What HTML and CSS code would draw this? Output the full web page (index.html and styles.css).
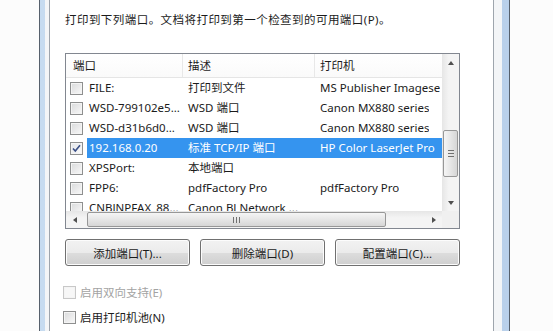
FILE: index.html
```html
<!DOCTYPE html>
<html lang="zh-CN">
<head>
    <meta charset="UTF-8">
    <title>端口</title>
    <link rel="stylesheet" href="styles.css">
</head>
<body>
    <div class="frame">
        <div class="frame-gap">
            <div class="panel">
                <p class="intro">打印到下列端口。文档将打印到第一个检查到的可用端口(P)。</p>

                <div class="ports">
                    <div class="ports-main">
                        <div class="ports-view">
                            <div class="ports-head">
                                <div class="hcell c1">端口</div>
                                <div class="hcell c2">描述</div>
                                <div class="hcell c3">打印机</div>
                            </div>
                            <div class="row">
                                <span class="cb-cell"><span class="cb"></span></span>
                                <div class="row-body"><span class="c1">FILE:</span><span class="c2">打印到文件</span><span class="c3">MS Publisher Imagese</span></div>
                            </div>
                            <div class="row">
                                <span class="cb-cell"><span class="cb"></span></span>
                                <div class="row-body"><span class="c1">WSD-799102e5...</span><span class="c2">WSD 端口</span><span class="c3">Canon MX880 series</span></div>
                            </div>
                            <div class="row">
                                <span class="cb-cell"><span class="cb"></span></span>
                                <div class="row-body"><span class="c1">WSD-d31b6d0...</span><span class="c2">WSD 端口</span><span class="c3">Canon MX880 series</span></div>
                            </div>
                            <div class="row">
                                <span class="cb-cell"><span class="cb checked"><svg viewBox="0 0 11 11" width="11" height="11"><path d="M2 5.5 L4.3 8 L9 2.2" fill="none" stroke="#3b4f86" stroke-width="1.6"/></svg></span></span>
                                <div class="row-body selected"><span class="c1">192.168.0.20</span><span class="c2">标准 TCP/IP 端口</span><span class="c3">HP Color LaserJet Pro</span></div>
                            </div>
                            <div class="row">
                                <span class="cb-cell"><span class="cb"></span></span>
                                <div class="row-body"><span class="c1">XPSPort:</span><span class="c2">本地端口</span><span class="c3"></span></div>
                            </div>
                            <div class="row">
                                <span class="cb-cell"><span class="cb"></span></span>
                                <div class="row-body"><span class="c1">FPP6:</span><span class="c2">pdfFactory Pro</span><span class="c3">pdfFactory Pro</span></div>
                            </div>
                            <div class="row">
                                <span class="cb-cell"><span class="cb"></span></span>
                                <div class="row-body"><span class="c1">CNBJNPFAX_88...</span><span class="c2">Canon BJ Network ...</span><span class="c3"></span></div>
                            </div>
                        </div>
                        <div class="vscroll">
                            <span class="sb-btn"><i class="arrow up"></i></span>
                            <span class="vtrack"><span class="vthumb"><i class="grip-h"></i></span></span>
                            <span class="sb-btn"><i class="arrow down"></i></span>
                        </div>
                    </div>
                    <div class="hscroll-row">
                        <div class="hscroll">
                            <span class="sb-btn"><i class="arrow left"></i></span>
                            <span class="htrack"><span class="hthumb"><i class="grip-v"></i></span></span>
                            <span class="sb-btn"><i class="arrow right"></i></span>
                        </div>
                        <div class="corner"></div>
                    </div>
                </div>

                <div class="actions">
                    <button>添加端口(T)...</button>
                    <button>删除端口(D)</button>
                    <button>配置端口(C)...</button>
                </div>

                <label class="opt disabled"><span class="cb"></span>启用双向支持(E)</label>
                <label class="opt second"><span class="cb"></span>启用打印机池(N)</label>
            </div>
        </div>
    </div>
</body>
</html>
```

FILE: styles.css
```css
* {
    box-sizing: border-box;
}
body {
    margin: 0;
    background: #fcfcfc;
    color: #1b1b1b;
    font-family: "Noto Sans", "Noto Sans CJK SC", sans-serif;
    font-size: 11.5px;
    overflow: hidden;
}
.frame {
    margin-left: 39px;
    width: 471px;
    height: 331px;
    border-left: 1px solid #56606c;
    border-right: 1px solid #56606c;
    background: linear-gradient(90deg, #c6dbf0, #b9d0ea);
    padding: 0 7px 0 5px;
}
.frame-gap {
    height: 100%;
    background: #f3f5f7;
    padding: 0 8px 0 4px;
}
.panel {
    height: 100%;
    background: #fff;
    border-left: 1px solid #9ea5ad;
    border-right: 1px solid #9ea5ad;
    padding: 12px 0 0 15px;
}
.intro {
    margin: 0;
    line-height: 16px;
    letter-spacing: 0.45px;
}

/* list box */
.ports {
    margin-top: 25px;
    width: 395px;
    height: 176px;
    border: 1px solid #828790;
}
.ports-main {
    display: flex;
    height: 157px;
}
.ports-view {
    width: 376px;
    overflow: hidden;
}
.ports-head {
    display: flex;
    height: 24px;
    border-bottom: 1px solid #e5e5e5;
    background: linear-gradient(#fff, #fafafa);
}
.hcell {
    flex: none;
    line-height: 23px;
    padding-left: 5px;
    border-right: 1px solid #e8e8e8;
    white-space: nowrap;
}
.hcell.c1 {
    width: 117px;
    padding-left: 7px;
}
.hcell.c2 {
    width: 132px;
}
.hcell.c3 {
    flex: 1;
    border-right: none;
}
.row {
    display: flex;
    height: 20px;
    line-height: 20px;
    white-space: nowrap;
}
.cb-cell {
    flex: none;
    width: 21px;
    padding-left: 4px;
    display: flex;
    align-items: center;
}
.row-body {
    flex: 1;
    display: flex;
    overflow: hidden;
}
.row-body span {
    flex: none;
    overflow: hidden;
}
.row-body .c1 {
    width: 96px;
    padding-left: 2px;
}
.row-body .c2 {
    width: 132px;
    padding-left: 5px;
}
.row-body .c3 {
    padding-left: 5px;
}
.row-body.selected {
    background: #3594ef;
    color: #fff;
}

/* checkboxes */
.cb {
    display: inline-flex;
    align-items: center;
    justify-content: center;
    width: 13px;
    height: 13px;
    border: 1px solid #8e8f8f;
    background: linear-gradient(135deg, #d9dadb, #f9f9f9);
    box-shadow: inset 0 0 0 1px #f4f4f4;
}
.cb.checked {
    background: linear-gradient(135deg, #e2e4e8, #fbfbfb);
}

/* scrollbars */
.vscroll {
    width: 17px;
    display: flex;
    flex-direction: column;
    background: linear-gradient(90deg, #e6e6e6, #f4f4f4 40%, #f4f4f4);
}
.sb-btn {
    width: 17px;
    height: 17px;
    display: flex;
    align-items: center;
    justify-content: center;
    flex: none;
}
.vtrack {
    flex: 1;
    display: flex;
    flex-direction: column;
    padding: 0 1px;
}
.vthumb {
    margin-top: 59px;
    height: 47px;
    border: 1px solid #979797;
    border-radius: 2px;
    background: linear-gradient(90deg, #f5f5f5, #e6e6e6 50%, #d6d6d6);
    display: flex;
    align-items: center;
    justify-content: center;
}
.grip-h {
    width: 6px;
    height: 7px;
    background: repeating-linear-gradient(#707070 0 1px, transparent 1px 3px);
}
.hscroll-row {
    display: flex;
    height: 17px;
}
.hscroll {
    width: 376px;
    display: flex;
    background: linear-gradient(#e6e6e6, #f4f4f4 40%, #f4f4f4);
}
.htrack {
    flex: 1;
    display: flex;
    padding: 1px 0;
}
.hthumb {
    margin-left: 4px;
    width: 299px;
    border: 1px solid #979797;
    border-radius: 2px;
    background: linear-gradient(#f5f5f5, #e6e6e6 50%, #d6d6d6);
    display: flex;
    align-items: center;
    justify-content: center;
}
.grip-v {
    width: 7px;
    height: 6px;
    background: repeating-linear-gradient(90deg, #707070 0 1px, transparent 1px 3px);
}
.corner {
    width: 17px;
    background: #f0f0f0;
}
.arrow {
    width: 0;
    height: 0;
    border: 3.5px solid transparent;
}
.arrow.up {
    border-bottom: 4px solid #505050;
    border-top: none;
}
.arrow.down {
    border-top: 4px solid #505050;
    border-bottom: none;
}
.arrow.left {
    border-right: 4px solid #505050;
    border-left: none;
}
.arrow.right {
    border-left: 4px solid #505050;
    border-right: none;
}

/* buttons */
.actions {
    margin-top: 10px;
    width: 395px;
    display: grid;
    grid-template-columns: repeat(3, 1fr);
    gap: 10px;
}
.actions button {
    height: 27px;
    font: inherit;
    color: #1b1b1b;
    border: 1px solid #707070;
    border-radius: 3px;
    background: linear-gradient(#f2f2f2, #ebebeb 50%, #dddddd 51%, #cfcfcf);
    box-shadow: inset 0 0 0 1px #fcfcfc;
    padding: 0;
}

.opt {
    display: flex;
    align-items: center;
    gap: 4px;
    height: 16px;
    margin: 18px 0 0 -2px;
}
.opt.second {
    margin-top: 9px;
}
.opt.disabled {
    color: #a3a3a3;
}
.opt.disabled .cb {
    border-color: #c8c8c8;
    background: #f7f7f7;
}
```
